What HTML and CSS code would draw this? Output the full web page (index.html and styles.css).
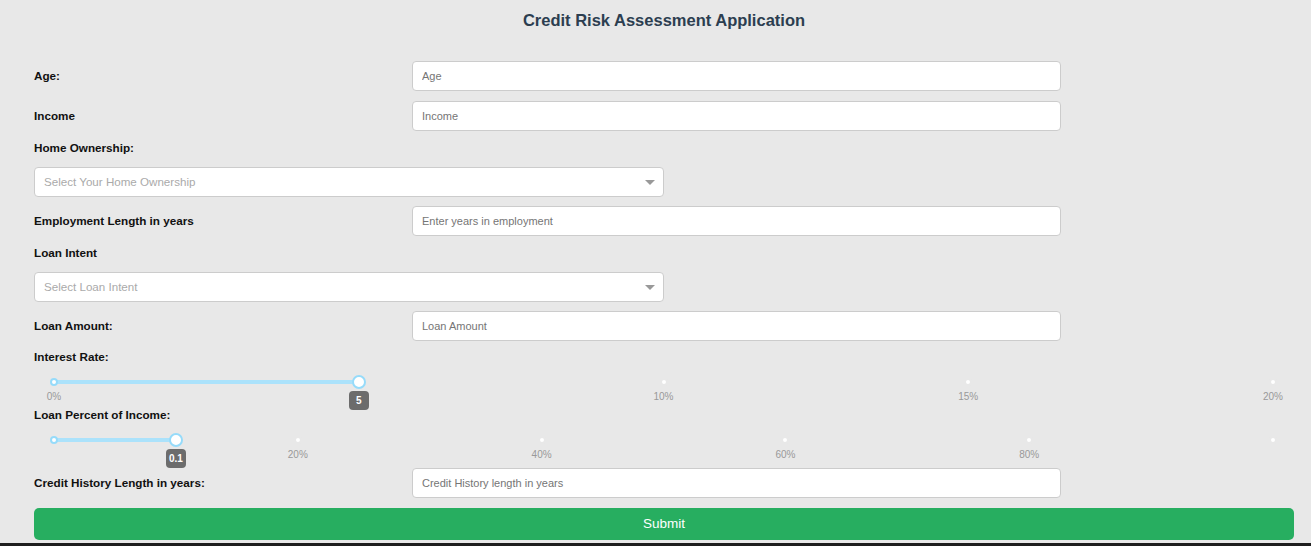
FILE: index.html
```html
<!DOCTYPE html>
<html lang="en">
<head>
<meta charset="utf-8">
<title>Credit Risk Assessment Application</title>
<link rel="stylesheet" href="styles.css">
</head>
<body>
<div class="app">
  <h1 class="title">Credit Risk Assessment Application</h1>

  <div class="row">
    <label class="label">Age:</label>
    <input class="input" type="text" placeholder="Age">
  </div>
  <div class="row">
    <label class="label">Income</label>
    <input class="input" type="text" placeholder="Income">
  </div>

  <div class="block-label">Home Ownership:</div>
  <div class="select">
    <span class="select-ph">Select Your Home Ownership</span>
    <span class="select-arrow"></span>
  </div>

  <div class="row">
    <label class="label">Employment Length in years</label>
    <input class="input" type="text" placeholder="Enter years in employment">
  </div>

  <div class="block-label">Loan Intent</div>
  <div class="select">
    <span class="select-ph">Select Loan Intent</span>
    <span class="select-arrow"></span>
  </div>

  <div class="row">
    <label class="label">Loan Amount:</label>
    <input class="input" type="text" placeholder="Loan Amount">
  </div>

  <div class="slider-label first">Interest Rate:</div>
  <div class="slider">
    <div class="rail"></div>
    <div class="track" style="width:25%"></div>
    <span class="dot active" style="left:0%"></span>
    <span class="dot active" style="left:25%"></span>
    <span class="dot" style="left:50%"></span>
    <span class="dot" style="left:75%"></span>
    <span class="dot" style="left:100%"></span>
    <span class="mark" style="left:0%">0%</span>
    <span class="mark" style="left:50%">10%</span>
    <span class="mark" style="left:75%">15%</span>
    <span class="mark" style="left:100%">20%</span>
    <span class="handle" style="left:25%"></span>
    <span class="tip" style="left:25%">5</span>
  </div>

  <div class="slider-label">Loan Percent of Income:</div>
  <div class="slider tall">
    <div class="rail"></div>
    <div class="track" style="width:10%"></div>
    <span class="dot active" style="left:0%"></span>
    <span class="dot" style="left:20%"></span>
    <span class="dot" style="left:40%"></span>
    <span class="dot" style="left:60%"></span>
    <span class="dot" style="left:80%"></span>
    <span class="dot" style="left:100%"></span>
    <span class="mark" style="left:20%">20%</span>
    <span class="mark" style="left:40%">40%</span>
    <span class="mark" style="left:60%">60%</span>
    <span class="mark" style="left:80%">80%</span>
    <span class="handle" style="left:10%"></span>
    <span class="tip" style="left:10%">0.1</span>
  </div>

  <div class="row">
    <label class="label">Credit History Length in years:</label>
    <input class="input" type="text" placeholder="Credit History length in years">
  </div>

  <button class="submit" type="button">Submit</button>
</div>
<div class="strip"></div>
</body>
</html>
```

FILE: styles.css
```css
* { box-sizing: border-box; }

html, body {
  margin: 0;
  padding: 0;
  background: #e8e8e8;
  font-family: "Liberation Sans", Arial, sans-serif;
  color: #111;
}

body {
  height: 546px;
  overflow: hidden;
}

.app {
  padding: 10px 17px 0 34px;
}

.title {
  margin: 0 0 31px;
  height: 20px;
  line-height: 20px;
  text-align: center;
  font-size: 16.5px;
  font-weight: bold;
  color: #2c3e50;
}

.row {
  display: flex;
  align-items: center;
  height: 30px;
  margin-bottom: 10px;
}

.label {
  width: 378px;
  flex: none;
  line-height: 16px;
  padding-bottom: 1px;
  font-size: 11.7px;
  font-weight: bold;
}

.input {
  width: 649px;
  height: 30px;
  border: 1px solid #ccc;
  border-radius: 4px;
  background: #fff;
  padding: 0 9px;
  font-family: "Liberation Sans", Arial, sans-serif;
  font-size: 11px;
  color: #333;
  outline: none;
}

.input::placeholder {
  color: #757575;
}

.block-label {
  height: 16px;
  line-height: 16px;
  margin: -1px 0 11px;
  font-size: 11.7px;
  font-weight: bold;
}

.select {
  width: 630px;
  height: 30px;
  border: 1px solid #ccc;
  border-radius: 4px;
  background: #fff;
  display: flex;
  align-items: center;
  justify-content: space-between;
  padding: 0 8px 2px 9px;
  margin-bottom: 9px;
}

.select-ph {
  font-size: 11.6px;
  color: #aaa;
}

.select-arrow {
  width: 0;
  height: 0;
  border-style: solid;
  border-width: 5px 5px 2.5px;
  border-color: #999 transparent transparent;
  margin-top: 5px;
}

.slider-label {
  height: 16px;
  line-height: 16px;
  font-size: 11.7px;
  font-weight: bold;
}

.slider-label.first {
  margin-top: -2px;
}

.slider {
  position: relative;
  height: 42px;
  margin: 0 21px 0 20px;
}

.slider.tall {
  height: 45px;
}

.rail,
.track {
  position: absolute;
  top: 15px;
  left: 0;
  height: 4px;
  border-radius: 2px;
}

.rail {
  right: 0;
  background: #e8e8e8;
}

.track {
  background: #abe2fb;
}

.dot {
  position: absolute;
  top: 13px;
  width: 8px;
  height: 8px;
  margin-left: -4px;
  border: 2px solid #e8e8e8;
  border-radius: 50%;
  background: #fff;
}

.dot.active {
  border-color: #96dbfa;
}

.mark {
  position: absolute;
  top: 26px;
  line-height: 12px;
  transform: translateX(-50%);
  font-size: 10px;
  color: #999;
}

.handle {
  position: absolute;
  top: 10px;
  width: 14px;
  height: 14px;
  margin-left: -7px;
  border: 2px solid #96dbfa;
  border-radius: 50%;
  background: #fff;
}

.tip {
  position: absolute;
  top: 26px;
  transform: translateX(-50%);
  min-width: 20px;
  height: 19px;
  line-height: 19px;
  padding: 0 3px;
  border-radius: 4px;
  background: #6c6c6c;
  color: #fff;
  font-size: 10px;
  font-weight: bold;
  text-align: center;
}

.submit {
  display: block;
  width: 100%;
  height: 32px;
  padding: 0 0 2px;
  border: none;
  border-radius: 5px;
  background: #27ae60;
  color: #fff;
  font-family: "Liberation Sans", Arial, sans-serif;
  font-size: 13.5px;
  cursor: pointer;
}

.strip {
  margin-top: 3px;
  height: 20px;
  background: #1e1e1e;
}
```
